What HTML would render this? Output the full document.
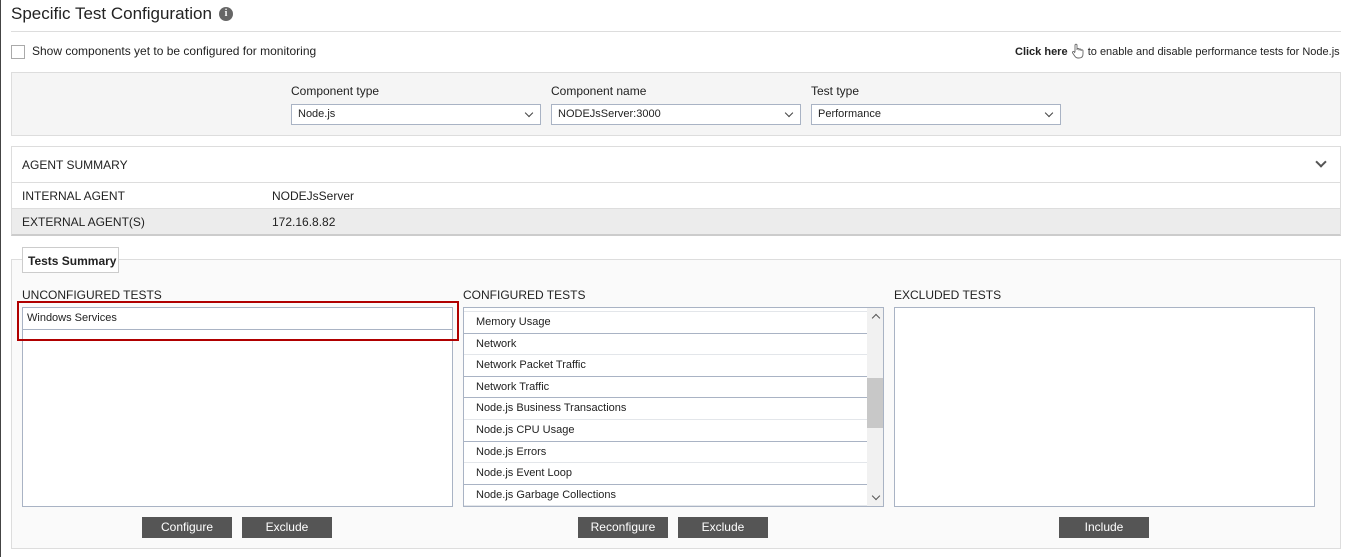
<!DOCTYPE html>
<html><head><style>
*{box-sizing:border-box;margin:0;padding:0}
body{width:1350px;height:557px;background:#fff;font-family:"Liberation Sans",sans-serif;color:#222;position:relative;overflow:hidden}
.a{position:absolute}
.t{font-size:12px}
.sel{position:absolute;top:104px;height:21px;border:1px solid #a9b3c4;background:#fff;font-size:11px;padding:3px 6px}
.sel:after{content:"";position:absolute;right:8px;top:5px;width:5px;height:5px;border-right:1.5px solid #444;border-bottom:1.5px solid #444;transform:rotate(45deg)}
.btn{position:absolute;top:517px;height:21px;width:90px;background:#555;color:#fff;font-size:12px;text-align:center;line-height:21px}
.list{position:absolute;top:307px;height:200px;border:1px solid #a9b3c4;background:#fff}
.row{height:21.6px;border-bottom:1px solid #e3e6ea;font-size:11px;padding-left:12px;line-height:21px;white-space:nowrap}
.row.d{border-bottom:1px solid #a9b3c4}
</style></head><body>
<div class="a" style="left:0;top:0;width:1px;height:557px;background:#444"></div>
<div class="a" style="left:11px;top:4px;font-size:17px;color:#222">Specific Test Configuration</div>
<div class="a" style="left:219px;top:7px;width:14px;height:14px;border-radius:50%;background:#666;color:#fff;font-size:10px;font-weight:bold;text-align:center;line-height:14px;font-family:'Liberation Serif',serif">i</div>
<div class="a" style="left:11px;top:31px;width:1330px;height:1px;background:#ddd"></div>
<div class="a" style="left:11px;top:45px;width:14px;height:14px;border:1px solid #aaa;background:#fff"></div>
<div class="a t" style="left:32px;top:44px">Show components yet to be configured for monitoring</div>
<div class="a" style="left:1015px;top:43px;font-size:11px;white-space:nowrap"><b>Click here</b> <svg width="14" height="16" viewBox="0 0 14 16" style="vertical-align:-4px"><path d="M4 9V2.2a1 1 0 0 1 2 0V7M6 6.5a1 1 0 0 1 2 0V7.5M8 7a1 1 0 0 1 2 0V8M10 7.8a1 1 0 0 1 2 0V11c0 2.5-1.5 4-4 4H7c-1.5 0-2.5-.8-3.3-2L1.5 9.8a1 1 0 0 1 1.6-1.1L4 10" fill="none" stroke="#666" stroke-width="0.9"/></svg> to enable and disable performance tests for Node.js</div>
<div class="a" style="left:11px;top:72px;width:1330px;height:64px;background:#f5f5f5;border:1px solid #ddd"></div>
<div class="a t" style="left:291px;top:84px">Component type</div>
<div class="a t" style="left:551px;top:84px">Component name</div>
<div class="a t" style="left:811px;top:84px">Test type</div>
<div class="sel" style="left:291px;width:250px">Node.js</div>
<div class="sel" style="left:551px;width:250px">NODEJsServer:3000</div>
<div class="sel" style="left:811px;width:250px">Performance</div>
<div class="a" style="left:11px;top:146px;width:1330px;height:90px;border:1px solid #ddd;border-bottom:2px solid #ccc"></div>
<div class="a t" style="left:22px;top:158px">AGENT SUMMARY</div>
<div class="a" style="left:1317px;top:158px;width:8px;height:8px;border-right:2px solid #555;border-bottom:2px solid #555;transform:rotate(45deg)"></div>
<div class="a" style="left:12px;top:182px;width:1328px;height:1px;background:#ddd"></div>
<div class="a t" style="left:22px;top:189px">INTERNAL AGENT</div>
<div class="a t" style="left:272px;top:189px">NODEJsServer</div>
<div class="a" style="left:12px;top:208px;width:1328px;height:26px;background:#ececec;border-top:1px solid #ddd"></div>
<div class="a t" style="left:22px;top:215px">EXTERNAL AGENT(S)</div>
<div class="a t" style="left:272px;top:215px">172.16.8.82</div>
<div class="a" style="left:11px;top:259px;width:1330px;height:290px;border:1px solid #ddd;background:#fafafa"></div>
<div class="a" style="left:22px;top:247px;width:97px;height:26px;border:1px solid #ccc;background:#fff;font-size:12px;font-weight:bold;padding:6px 5px;white-space:nowrap">Tests Summary</div>
<div class="a t" style="left:22px;top:288px">UNCONFIGURED TESTS</div>
<div class="a t" style="left:463px;top:288px">CONFIGURED TESTS</div>
<div class="a t" style="left:894px;top:288px">EXCLUDED TESTS</div>
<div class="list" style="left:22px;width:431px"><div class="row d" style="padding-left:4px;height:22px">Windows Services</div></div>
<div class="a" style="left:17px;top:301px;width:442px;height:40px;border:2px solid #b00000"></div>
<div class="list" style="left:463px;width:421px;overflow:hidden">
<div style="height:4px;border-bottom:1px solid #e3e6ea;width:403px"></div>
<div style="width:403px">
<div class="row d">Memory Usage</div><div class="row">Network</div><div class="row d">Network Packet Traffic</div><div class="row d">Network Traffic</div><div class="row">Node.js Business Transactions</div><div class="row d">Node.js CPU Usage</div><div class="row">Node.js Errors</div><div class="row d">Node.js Event Loop</div><div class="row">Node.js Garbage Collections</div></div>
<div class="a" style="left:403px;top:0;width:17px;height:198px;background:#f1f1f1"></div>
<div class="a" style="left:403px;top:70px;width:17px;height:50px;background:#c8c8c8"></div>
<div class="a" style="left:409px;top:7px;width:6px;height:6px;border-left:1.5px solid #555;border-top:1.5px solid #555;transform:rotate(45deg)"></div>
<div class="a" style="left:409px;top:185px;width:6px;height:6px;border-right:1.5px solid #555;border-bottom:1.5px solid #555;transform:rotate(45deg)"></div>
</div>
<div class="list" style="left:894px;width:421px"></div>
<div class="btn" style="left:142px">Configure</div>
<div class="btn" style="left:242px">Exclude</div>
<div class="btn" style="left:578px">Reconfigure</div>
<div class="btn" style="left:678px">Exclude</div>
<div class="btn" style="left:1059px">Include</div>
</body></html>
